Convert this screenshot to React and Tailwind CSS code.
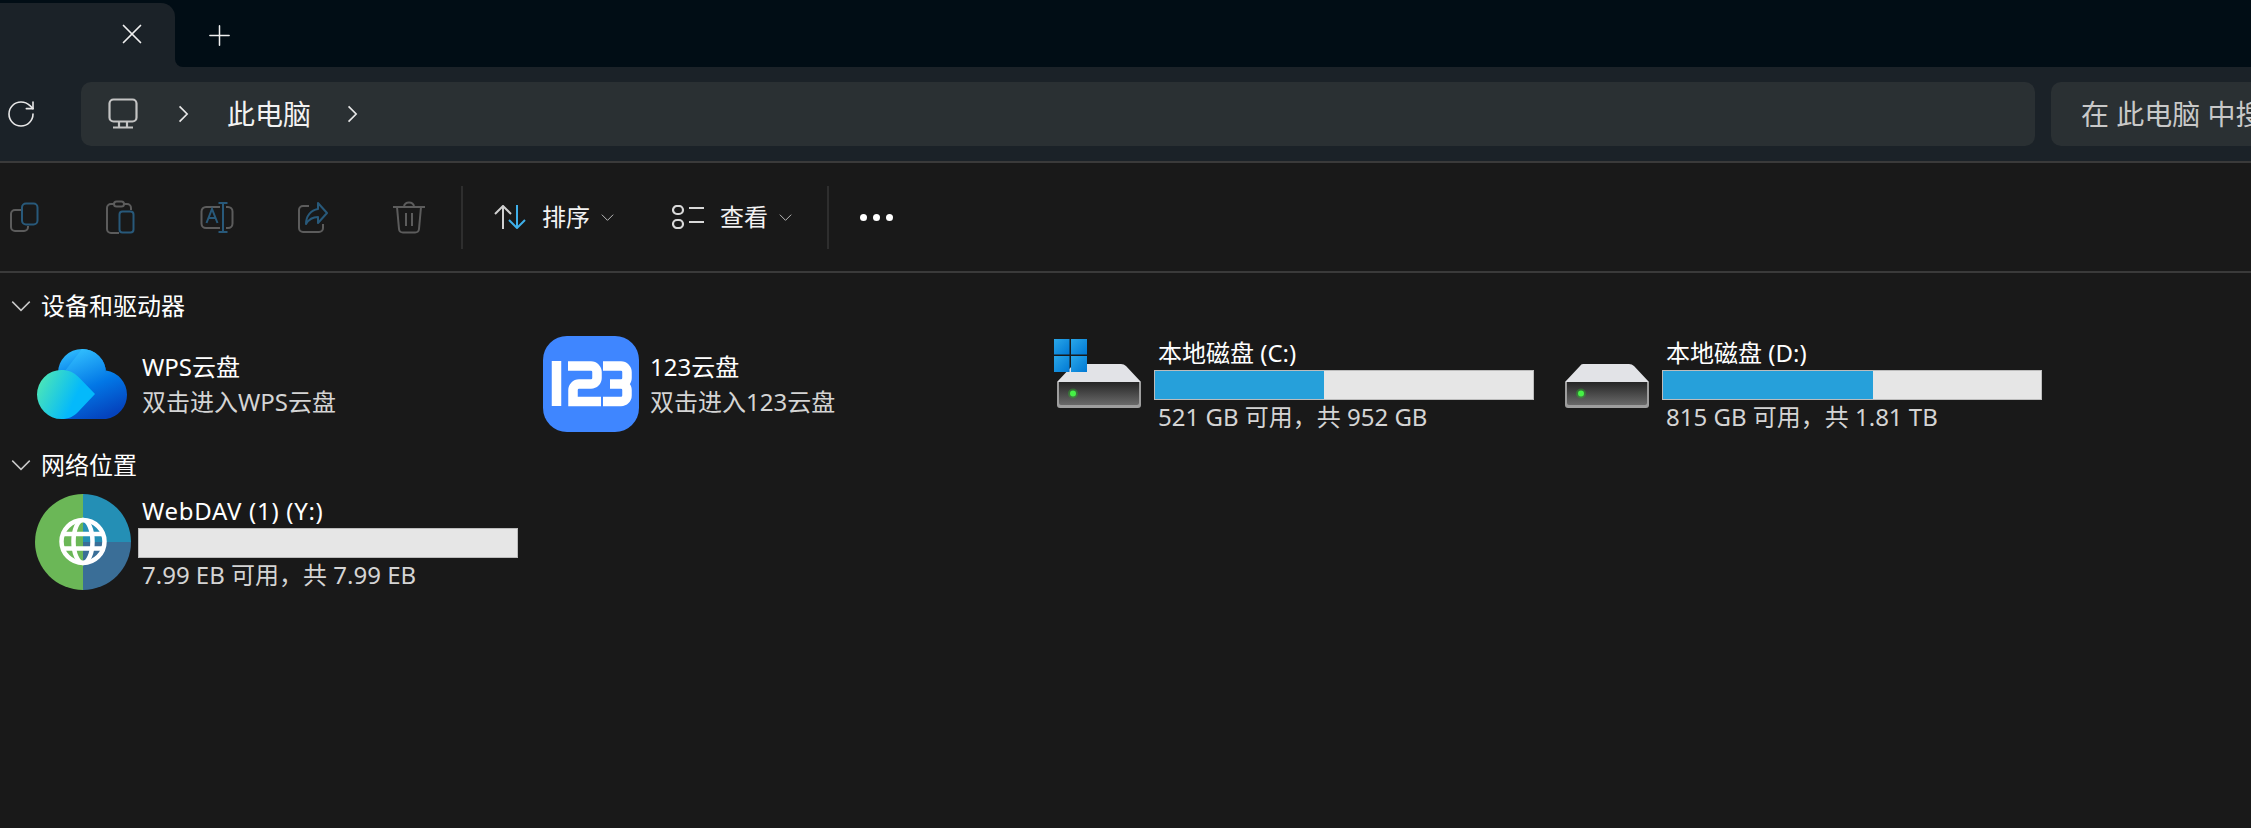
import React from "react";
import { RotateCw, Plus, X } from "lucide-react";

const Chevron = ({ dir = "right", className = "" }) => (
  <svg viewBox="0 0 16 16" className={className} fill="none" stroke="currentColor" strokeWidth="1.2">
    {dir === "right" ? <path d="M5.5 2.500 11 8l-5.500 5.500" /> : <path d="M1 4.500l7 7 7-7" />}
  </svg>
);

const MonitorIcon = () => (
  <svg viewBox="0 0 32 32" className="w-8 h-8" fill="none" stroke="#c4c4c4" strokeWidth="2.2">
    <rect x="1.500" y="1.500" width="27" height="22" rx="4" />
    <path d="M11 24v5M19 24v5M5 29.500h20" />
  </svg>
);

const DIM = "#5c5c5c";
const DIMBLUE = "#28597a";

const CopyIcon = () => (
  <svg viewBox="0 0 34 34" className="w-[34px] h-[34px]" fill="none" strokeWidth="2">
    <path d="M13 10H7a4 4 0 0 0-4 4v13a4 4 0 0 0 4 4h9a4 4 0 0 0 4-4v-1" stroke={DIM} />
    <rect x="14" y="3.500" width="15.500" height="21" rx="4" stroke={DIMBLUE} />
  </svg>
);

const PasteIcon = () => (
  <svg viewBox="0 0 34 34" className="w-[34px] h-[34px]" fill="none" strokeWidth="2">
    <path d="M10 4H7a4 4 0 0 0-4 4v21a4 4 0 0 0 4 4h8M27 10V8a4 4 0 0 0-4-4h-3" stroke={DIM} />
    <rect x="10" y="1.500" width="10" height="5" rx="2.500" stroke={DIM} />
    <rect x="15.500" y="11.500" width="14" height="21" rx="3" stroke={DIMBLUE} />
  </svg>
);

const RenameIcon = () => (
  <svg viewBox="0 0 34 34" className="w-[34px] h-[34px]" fill="none" strokeWidth="2">
    <path d="M20 7H6a4.500 4.500 0 0 0-4.500 4.500v12A4.500 4.500 0 0 0 6 28h14M26 7h2a4.500 4.500 0 0 1 4.500 4.500v12A4.500 4.500 0 0 1 28 28h-2" stroke={DIM} />
    <path d="M23 3v29M18.500 3h9M18.500 32h9" stroke={DIMBLUE} />
    <path d="M6.500 23l5.500-14 5.500 14M8.500 18h7" stroke={DIMBLUE} />
  </svg>
);

const ShareIcon = () => (
  <svg viewBox="0 0 34 34" className="w-[34px] h-[34px]" fill="none" strokeWidth="2">
    <path d="M13 6H7a4 4 0 0 0-4 4v18a4 4 0 0 0 4 4h16a4 4 0 0 0 4-4v-4" stroke={DIM} />
    <path d="M22 3l9 10-9 10v-6c-5 0-9 2-12 7 0-8 5-14 12-15z" stroke={DIMBLUE} strokeLinejoin="round" />
  </svg>
);

const TrashIcon = () => (
  <svg viewBox="0 0 34 34" className="w-[34px] h-[34px]" fill="none" stroke={DIM} strokeWidth="2">
    <path d="M1 7h32M12 7c0-6 10-6 10 0M5 7l2 22a4 4 0 0 0 4 3.500h12a4 4 0 0 0 4-3.500l2-22M14 13v13M20 13v13" />
  </svg>
);

const SortIcon = () => (
  <svg viewBox="0 0 32 24" className="w-8 h-6" fill="none" strokeWidth="2">
    <path d="M9 24V1M1 9l8-8 8 8" stroke="#d0d0d0" />
    <path d="M23 0v23M15 15l8 8 8-8" stroke="#3fb0ea" />
  </svg>
);

const ViewIcon = () => (
  <svg viewBox="0 0 32 24" className="w-8 h-6" fill="none" stroke="#d8d8d8" strokeWidth="2.200">
    <rect x="1" y="1" width="10" height="8" rx="4" />
    <rect x="1" y="15" width="10" height="8" rx="4" />
    <path d="M17 3h15M17 17h15" />
  </svg>
);

const WpsIcon = () => (
  <svg viewBox="0 0 96 96" className="w-24 h-24">
    <defs>
      <linearGradient id="wpsBack" x1="0.2" y1="0" x2="0.6" y2="1">
        <stop offset="0" stopColor="#34c2ff" />
        <stop offset="0.55" stopColor="#0277e6" />
        <stop offset="1" stopColor="#0443bd" />
      </linearGradient>
      <linearGradient id="wpsFront" x1="0" y1="0.2" x2="1" y2="0.6">
        <stop offset="0" stopColor="#4fe8b4" />
        <stop offset="0.7" stopColor="#04b9fb" />
      </linearGradient>
    </defs>
    <circle cx="47" cy="37" r="24" fill="url(#wpsBack)" />
    <path d="M47 13a24 24 0 0 1 24 24v-2.500a24.500 24.500 0 0 1 0 48.500H26V40z" fill="url(#wpsBack)" />
    <path d="M26.500 34a24.500 24.500 0 0 0 0 49c7 0 12.500-2.500 17-7.500L60 58 43.500 41c-4.500-4.500-10-7-17-7z" fill="url(#wpsFront)" />
  </svg>
);

const Pan123Icon = () => (
  <svg viewBox="0 0 96 96" className="w-24 h-24">
    <rect width="96" height="96" rx="24" fill="#3f86ff" />
    <g fill="none" stroke="#fff" strokeWidth="9.500">
      <path d="M13.500 25v45" />
      <path d="M25 30h23a6 6 0 0 1 6 6v6a6 6 0 0 1-6 6H36a6 6 0 0 0-6 6v11.500h28" />
      <path d="M60 30h18a6 6 0 0 1 6 6v6a6 6 0 0 1-6 6H67M78 48a6 6 0 0 1 6 6v5.500a6 6 0 0 1-6 6H60" />
    </g>
  </svg>
);

const DriveIcon = ({ system }) => {
  const id = system ? "c" : "d";
  return (
    <svg viewBox="0 0 96 96" className="w-24 h-24">
      <defs>
        <linearGradient id={`driveFront${id}`} x1="0" y1="0" x2="0" y2="1">
          <stop offset="0" stopColor="#252525" />
          <stop offset="1" stopColor="#6a6a6a" />
        </linearGradient>
        <linearGradient id={`win${id}`} x1="0" y1="0" x2="1" y2="1">
          <stop offset="0" stopColor="#2aa7e8" />
          <stop offset="1" stopColor="#0078d4" />
        </linearGradient>
      </defs>
      <path d="M24 28h46q3 0 5 2l15 16H6l15-16q1-2 3-2z" fill="#e2e3e7" />
      <path d="M6 46h84v23q0 3-3 3H9q-3 0-3-3z" fill="#9e9e9e" />
      <path d="M8 46h80v21q0 2-2 2H10q-2 0-2-2z" fill={`url(#driveFront${id})`} />
      <circle cx="22" cy="57.500" r="5" fill="#22c822" opacity="0.35" />
      <circle cx="22" cy="57.500" r="3" fill="#46f046" />
      {system && (
        <g fill={`url(#win${id})`}>
          <rect x="3" y="3" width="15.500" height="15.500" />
          <rect x="20" y="3" width="16" height="15.500" />
          <rect x="3" y="20" width="15.500" height="16" />
          <rect x="20" y="20" width="16" height="16" />
        </g>
      )}
    </svg>
  );
};

const GlobeIcon = () => (
  <svg viewBox="0 0 96 96" className="w-24 h-24">
    <path d="M48 0a48 48 0 0 0 0 96z" fill="#6bb757" />
    <path d="M48 0a48 48 0 0 1 48 48H48z" fill="#248fb5" />
    <path d="M48 96a48 48 0 0 0 48-48H48z" fill="#3a6e97" />
    <g fill="none" stroke="#fff" strokeWidth="4.500">
      <circle cx="48" cy="47.500" r="21.500" />
      <ellipse cx="48" cy="47.500" rx="9.500" ry="21.500" />
      <path d="M27 40h42M27 54.500h42" />
    </g>
  </svg>
);

const UsageBar = ({ percent }) => (
  <div className="w-[380px] h-[30px] bg-[#e6e6e6] border border-[#bcbcbc]">
    {percent > 0 && <div className="h-full bg-[#26a0da]" style={{ width: `${percent}%` }} />}
  </div>
);

const LinkTile = ({ icon, name, sub }) => (
  <div className="w-[508px] h-24 flex items-center">
    <div className="w-[108px] pl-[5px]">{icon}</div>
    <div className="pl-1 text-[24px] leading-[35px]">
      <div className="text-white">{name}</div>
      <div className="text-[#d4d4d4]">{sub}</div>
    </div>
  </div>
);

const DriveTile = ({ icon, name, percent, usage, nameClass = "" }) => (
  <div className="w-[508px] h-24 flex items-start">
    <div className="w-[108px] pl-[5px]">{icon}</div>
    <div className="text-[24px] leading-[34px]">
      <div className={`pl-1 text-white ${nameClass}`}>{name}</div>
      <UsageBar percent={percent} />
      <div className="pl-1 text-[#d4d4d4]">{usage}</div>
    </div>
  </div>
);

const SectionHeader = ({ title, className = "" }) => (
  <div className={`h-7 flex items-center pl-[11px] gap-[10px] text-[24px] text-white ${className}`}>
    <Chevron dir="down" className="w-5 h-5 text-[#c8c8c8]" />
    <span>{title}</span>
  </div>
);

const ToolButton = ({ children }) => (
  <div className="w-[50px] flex justify-center">{children}</div>
);

const Separator = () => <div className="w-0.5 h-[63px] bg-[#2e2e2e]" />;

export default function App() {
  return (
    <div className="w-[2251px] h-[828px] overflow-hidden bg-[#191919] font-['Noto_Sans','Noto_Sans_CJK_SC',sans-serif]">
      {/* Tabs */}
      <div className="h-[67px] flex bg-[#1b2228]">
        <div className="w-[175px] pt-[3px] bg-[#010d15]">
          <div className="h-full bg-[#1b2228] rounded-tr-[14px] flex items-center justify-end pr-[26px] pb-[3px] text-[#f0f0f0]">
            <X className="w-[34px] h-[34px]" strokeWidth={1.2} />
          </div>
        </div>
        <div className="flex-1 bg-[#010d15] rounded-bl-[8px] flex items-center pl-7 pt-[4px] text-[#f0f0f0]">
          <Plus className="w-[33px] h-[33px]" strokeWidth={1.1} />
        </div>
      </div>

      {/* Address bar */}
      <div className="h-24 flex items-center bg-[#1b2228] border-b-2 border-[#3a3a3a]">
        <div className="w-[81px] pl-[5px] text-[#e8e8e8]">
          <RotateCw className="w-8 h-8" strokeWidth={1.2} />
        </div>
        <div className="w-[1954px] h-16 rounded-[10px] bg-[#2a3033] flex items-center pl-[27px] text-[#f2f2f2]">
          <MonitorIcon />
          <Chevron className="w-[22px] h-[22px] ml-[32px] text-[#e8e8e8]" />
          <span className="ml-[33px] text-[28px]">此电脑</span>
          <Chevron className="w-[22px] h-[22px] ml-[30px] text-[#e8e8e8]" />
        </div>
        <div className="ml-4 flex-1 h-16 rounded-l-[10px] bg-[#2a3033] flex items-center pl-[30px] overflow-hidden whitespace-nowrap text-[28px] text-[#c8c8c8]">
          在 此电脑 中搜索
        </div>
      </div>

      {/* Command bar */}
      <div className="h-[110px] flex items-center border-b-2 border-[#3a3a3a]">
        <div className="flex gap-[46px] mr-[27px]">
          <ToolButton><CopyIcon /></ToolButton>
          <ToolButton><PasteIcon /></ToolButton>
          <ToolButton><RenameIcon /></ToolButton>
          <ToolButton><ShareIcon /></ToolButton>
          <ToolButton><TrashIcon /></ToolButton>
        </div>
        <Separator />
        <div className="flex items-center w-[364px] text-[24px] text-[#f2f2f2]">
          <div className="ml-[31px]"><SortIcon /></div>
          <span className="ml-[16px]">排序</span>
          <Chevron dir="down" className="w-[13px] h-[13px] ml-[11px] text-[#bdbdbd]" />
          <div className="ml-[58px]"><ViewIcon /></div>
          <span className="ml-[16px]">查看</span>
          <Chevron dir="down" className="w-[13px] h-[13px] ml-[11px] text-[#bdbdbd]" />
        </div>
        <Separator />
        <div className="flex gap-[6px] ml-[31px]">
          <span className="w-[7px] h-[7px] rounded-full bg-white" />
          <span className="w-[7px] h-[7px] rounded-full bg-white" />
          <span className="w-[7px] h-[7px] rounded-full bg-white" />
        </div>
      </div>

      {/* Devices and drives */}
      <div className="pt-[19px]">
        <SectionHeader title="设备和驱动器" />
        <div className="flex pl-[30px] mt-4">
          <LinkTile icon={<WpsIcon />} name="WPS云盘" sub="双击进入WPS云盘" />
          <LinkTile icon={<Pan123Icon />} name="123云盘" sub="双击进入123云盘" />
          <DriveTile icon={<DriveIcon system />} name="本地磁盘 (C:)" percent={44.700} usage="521 GB 可用，共 952 GB" />
          <DriveTile icon={<DriveIcon />} name="本地磁盘 (D:)" percent={55.500} usage="815 GB 可用，共 1.81 TB" />
        </div>
        <SectionHeader title="网络位置" className="mt-[19px]" />
        <div className="flex pl-[30px] mt-[15px]">
          <DriveTile icon={<GlobeIcon />} name="WebDAV (1) (Y:)" nameClass="tracking-[0.7px]" percent={0} usage="7.99 EB 可用，共 7.99 EB" />
        </div>
      </div>
    </div>
  );
}
